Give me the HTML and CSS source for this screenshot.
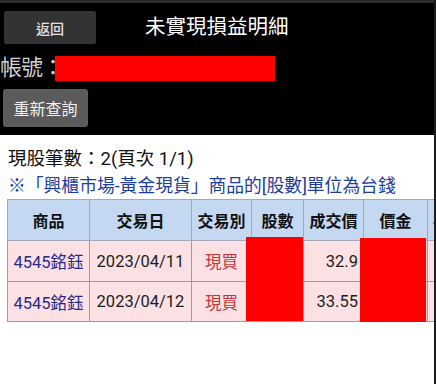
FILE: index.html
```html
<!DOCTYPE html>
<html lang="zh-Hant">
<head>
<meta charset="utf-8">
<title>未實現損益明細</title>
<link rel="stylesheet" href="styles.css">
</head>
<body>
<div class="page">
  <header class="top">
    <div class="top-row">
      <button class="btn-back">返回</button>
      <h1 class="title">未實現損益明細</h1>
    </div>
    <div class="account">
      <span class="account-label">帳號：</span><span class="redact-bar"></span>
    </div>
    <button class="btn-query">重新查詢</button>
  </header>
  <main class="content">
    <p class="count">現股筆數：2(頁次 1/1)</p>
    <p class="note">※「興櫃市場-黃金現貨」商品的[股數]單位為台錢</p>
    <div class="table-wrap">
      <table class="grid">
        <colgroup>
          <col class="c-name"><col class="c-date"><col class="c-type"><col class="c-qty"><col class="c-price"><col class="c-amt"><col class="c-fee">
        </colgroup>
        <thead>
          <tr><th>商品</th><th>交易日</th><th>交易別</th><th>股數</th><th>成交價</th><th>價金</th><th>手續費</th></tr>
        </thead>
        <tbody>
          <tr class="r1"><td class="name">4545銘鈺</td><td class="date">2023/04/11</td><td class="type">現買</td><td></td><td class="num">32.9</td><td></td><td></td></tr>
          <tr class="r2"><td class="name">4545銘鈺</td><td class="date">2023/04/12</td><td class="type">現買</td><td></td><td class="num">33.55</td><td></td><td></td></tr>
        </tbody>
      </table>
      <div class="redact redact-qty"></div>
      <div class="redact redact-amt"></div>
    </div>
  </main>
</div>
</body>
</html>
```

FILE: styles.css
```css
* { box-sizing: border-box; }
html, body { margin: 0; padding: 0; background: #fff; }
body { font-family: Roboto, "Noto Sans CJK TC", "Noto Sans", sans-serif; }

.page {
  width: 436px;
  height: 384px;
  overflow: hidden;
  border-right: 2px solid #1c1c1c;
  background: #fff;
}

.top {
  background: #000;
  border-top: 3px solid #2c2c2c;
  padding: 8px 0 8px 3px;
  height: 135px;
}

.top-row {
  display: flex;
  align-items: center;
  height: 33px;
}

.btn-back {
  margin: 0 0 0 1px;
  width: 92px;
  height: 33px;
  border: none;
  border-radius: 2px;
  background: #333335;
  color: #e2e2e2;
  font: 500 14px Roboto, "Noto Sans CJK TC", sans-serif;
  padding: 0;
}

.title {
  margin: 0 0 0 49px;
  font-weight: normal;
  font-size: 20.5px;
  color: #fff;
  line-height: 1;
}

.account {
  display: flex;
  align-items: center;
  height: 36px;
  margin: 6px 0 0 -3px;
}

.account-label {
  font-size: 22px;
  color: #cfcfcf;
  line-height: 1;
  letter-spacing: -1px;
}

.redact-bar {
  display: block;
  width: 220px;
  height: 25px;
  margin-left: -8px;
  background: #ff0000;
}

.btn-query {
  margin: 3px 0 0 0;
  width: 85px;
  height: 38px;
  border: none;
  border-radius: 3px;
  background: #5b5b5b;
  color: #f2f2f2;
  font: 16px Roboto, "Noto Sans CJK TC", sans-serif;
  padding: 0;
}

.content {
  padding: 11px 0 0 8px;
}

.count {
  margin: 0;
  font-size: 18.5px;
  line-height: 27px;
  height: 27px;
  color: #111;
}

.note {
  margin: 0;
  font-size: 17.8px;
  line-height: 26px;
  height: 26px;
  color: #1c3ea0;
  white-space: nowrap;
}

.table-wrap {
  position: relative;
  margin-left: -1px;
  width: 460px;
}

.grid {
  border-collapse: collapse;
  table-layout: fixed;
  width: 460px;
}

.c-name { width: 82px; }
.c-date { width: 102px; }
.c-type { width: 60px; }
.c-qty { width: 52px; }
.c-price { width: 60px; }
.c-amt { width: 64px; }
.c-fee { width: 40px; }

.grid th, .grid td {
  border: 1px solid #9c9ca6;
  padding: 0 5px;
  white-space: nowrap;
  overflow: hidden;
}

.grid th {
  background: #c4d8f1;
  font-size: 16px;
  font-weight: bold;
  color: #111;
  height: 41px;
  text-align: center;
  border-color: #a3a9b8;
}

.grid td {
  background: #fbe1e3;
  font-size: 16.5px;
  color: #1d1d1d;
  text-align: center;
}

.grid tr.r1 td { height: 41px; }
.grid tr.r2 td { height: 40px; }

.grid td.name { color: #2a2a8e; padding: 0 2px; }
.grid td.type { color: #c3343c; }
.grid td.num { text-align: right; padding-right: 5px; }

.redact {
  position: absolute;
  background: #ff0000;
}
.redact-qty { left: 239px; top: 38px; width: 57px; height: 84px; }
.redact-amt { left: 353px; top: 39px; width: 66px; height: 84px; }
```
